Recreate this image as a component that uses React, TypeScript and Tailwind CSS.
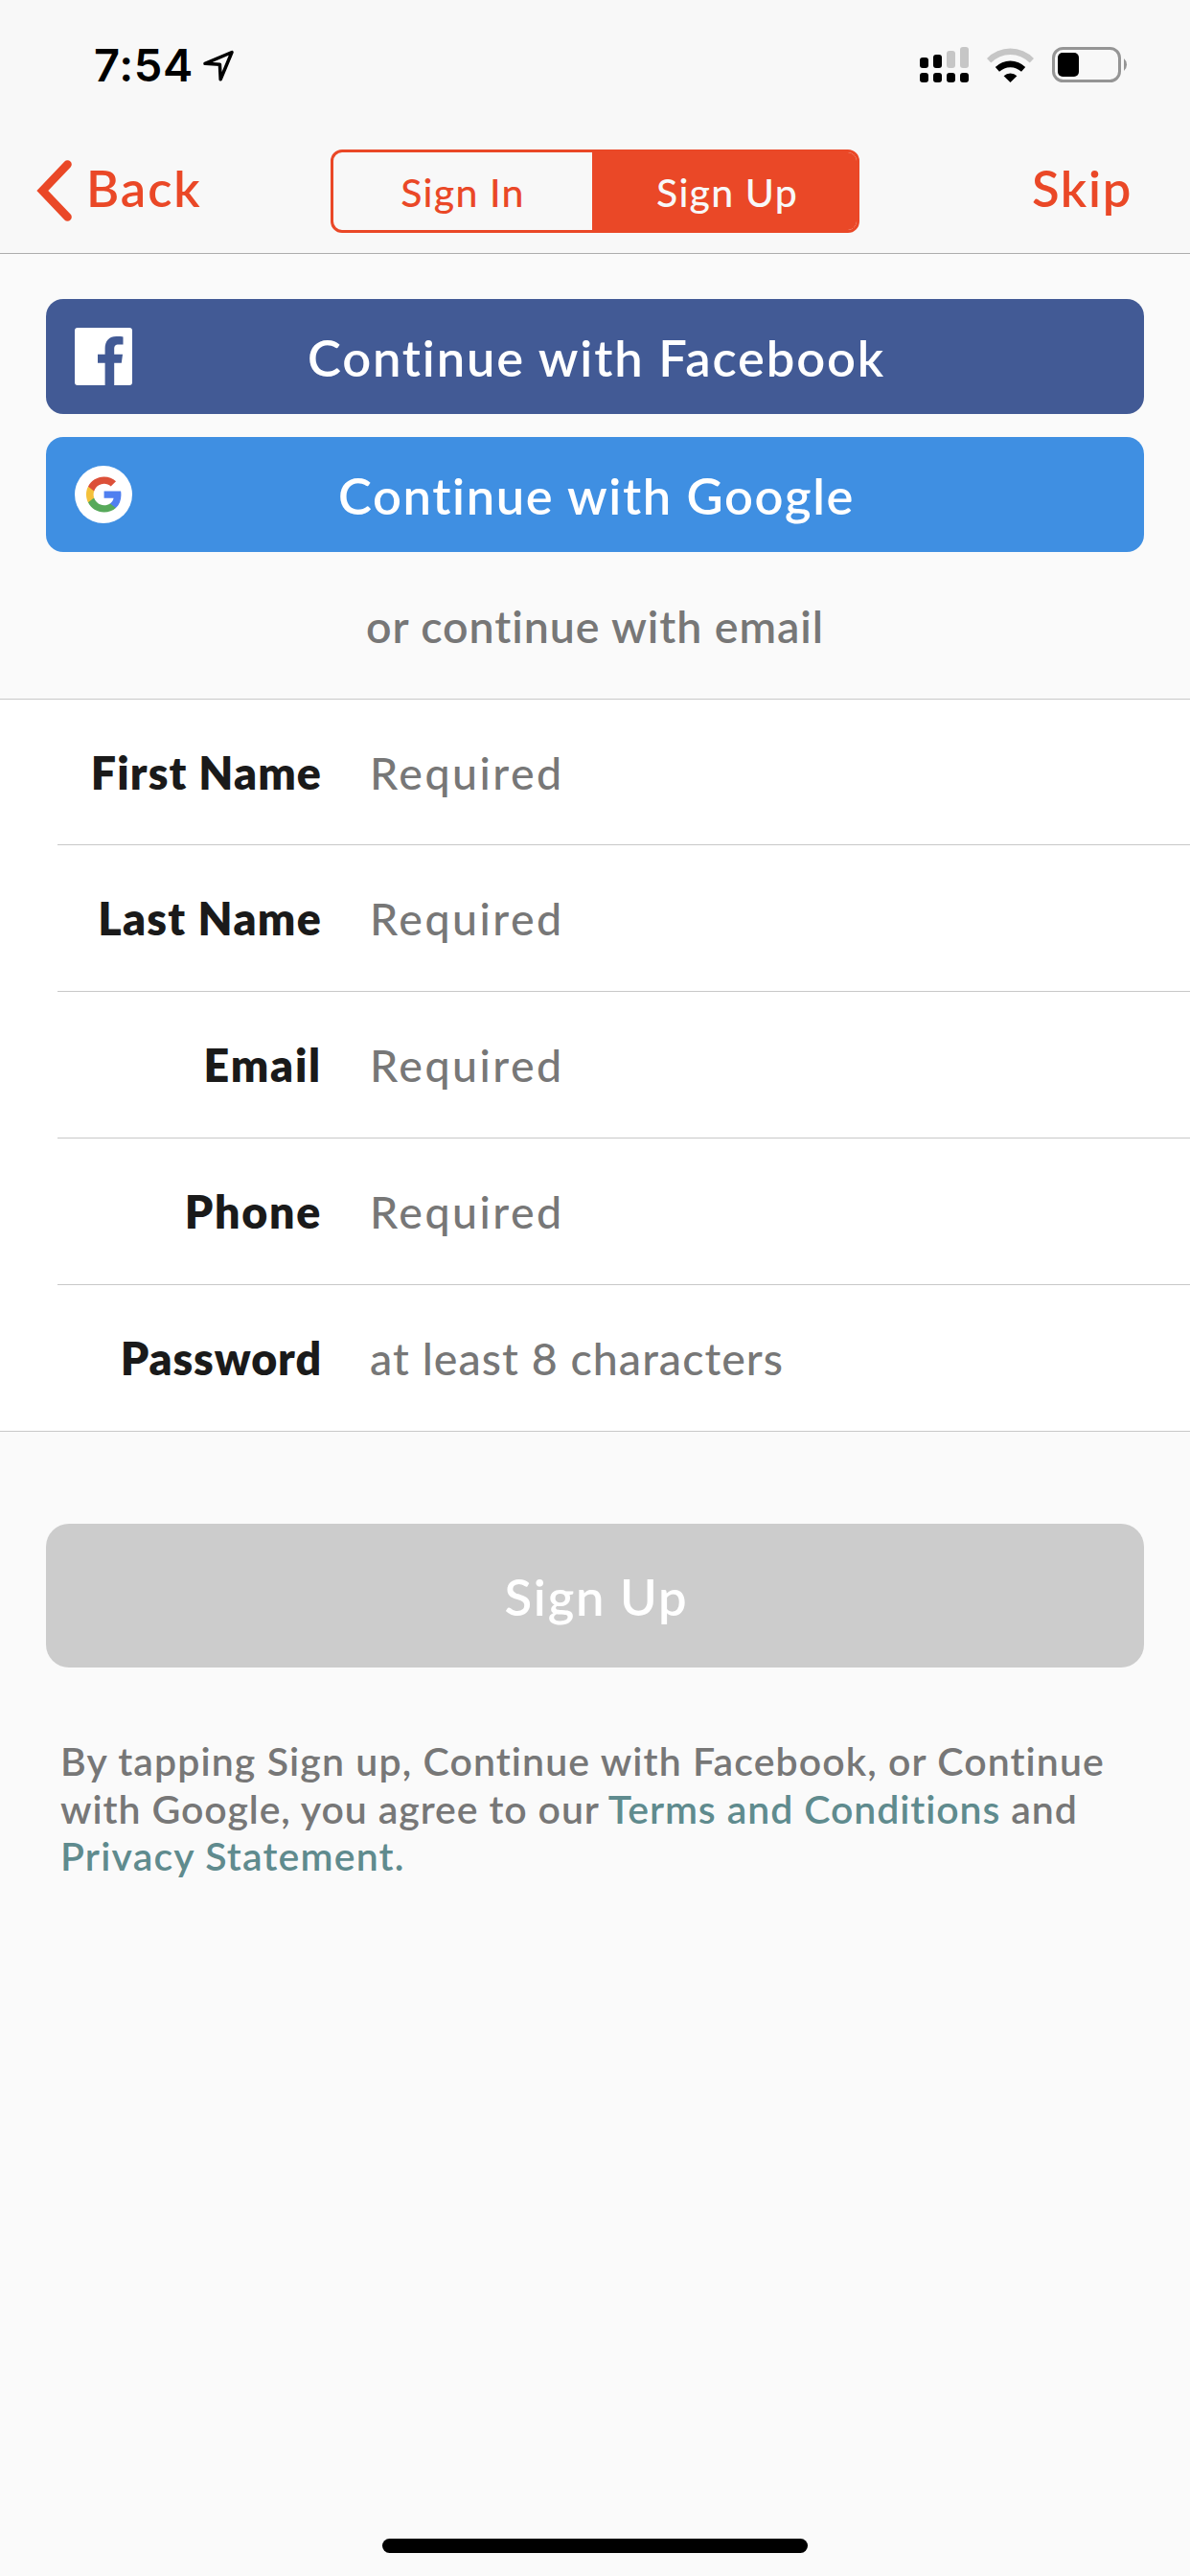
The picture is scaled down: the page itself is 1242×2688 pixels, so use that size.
import type { ReactNode } from 'react';

interface Field {
  label: string;
  type: string;
  placeholder: string;
  rowClass: string;
  labelClass: string;
  inputClass: string;
}

const FIELDS: Field[] = [
  { label: 'First Name', type: 'text', placeholder: 'Required', rowClass: 'h-[152px] border-b', labelClass: 'tracking-[1.1px]', inputClass: 'tracking-[2.5px]' },
  { label: 'Last Name', type: 'text', placeholder: 'Required', rowClass: 'h-[153px] border-b', labelClass: 'tracking-[1.3px]', inputClass: 'tracking-[2.5px]' },
  { label: 'Email', type: 'email', placeholder: 'Required', rowClass: 'h-[153px] border-b', labelClass: 'tracking-[1.8px]', inputClass: 'tracking-[2.5px]' },
  { label: 'Phone', type: 'tel', placeholder: 'Required', rowClass: 'h-[153px] border-b', labelClass: 'tracking-[1.7px]', inputClass: 'tracking-[2.5px]' },
  { label: 'Password', type: 'password', placeholder: 'at least 8 characters', rowClass: 'h-[152px]', labelClass: 'tracking-[0.9px]', inputClass: 'tracking-[1.05px]' },
];

function LocationIcon() {
  return (
    <svg width="34" height="34" viewBox="0 0 34 34" fill="none" stroke="#000" strokeWidth="3.5" strokeLinejoin="round">
      <path d="M3 15.3 31 3.5 19.2 31.8 18.4 16.2Z" />
    </svg>
  );
}

// Two stacked rows: dual SIM signal
function SignalIcon() {
  return (
    <svg width="51" height="37" viewBox="0 0 51 37" fill="#000">
      <rect x="0" y="11" width="9" height="11" rx="3" />
      <rect x="14" y="8" width="9" height="14" rx="3" />
      <rect x="28" y="4" width="9" height="18" rx="3" fill="#c6c6c6" />
      <rect x="42" y="0" width="9" height="22" rx="3" fill="#c6c6c6" />
      <rect x="0" y="27" width="9" height="10" rx="3" />
      <rect x="14" y="27" width="9" height="10" rx="3" />
      <rect x="28" y="27" width="9" height="10" rx="3" />
      <rect x="42" y="27" width="9" height="10" rx="3" />
    </svg>
  );
}

function WifiIcon() {
  return (
    <svg width="49" height="37" viewBox="0 0 49 37" fill="#000">
      <path d="M0 12A34 34 0 0 1 49 12L44.7 16.6A28 28 0 0 0 4.3 16.6Z" fill="#c6c6c6" />
      <path d="M8.8 21A22 22 0 0 1 40.2 21L36 25.8A16.5 16.5 0 0 0 13 25.8Z" />
      <path d="M17.6 30.2A10 10 0 0 1 31.4 30.2L24.5 37Z" />
    </svg>
  );
}

function BatteryIcon() {
  return (
    <svg width="79" height="37" viewBox="0 0 79 37">
      <rect x="1.5" y="1.5" width="69" height="34" rx="10" fill="none" stroke="#959595" strokeWidth="3" />
      <rect x="6" y="6" width="22" height="25" rx="5" fill="#000" />
      <path d="M75 12a8.5 8.5 0 0 1 0 13Z" fill="#959595" />
    </svg>
  );
}

function FacebookIcon() {
  return (
    <svg width="60" height="60" viewBox="0 0 60 60">
      <rect width="60" height="60" rx="3" fill="#fff" />
      <path
        d="M31.6 60V36.8H24V27.8H31.6V21.5C31.6 13.5 36.3 9 43.4 9C46.5 9 49.3 9.2 50.5 9.4V17.6H46C42 17.6 41.2 19.5 41.2 22.3V27.8H50L48.8 36.8H41.2V60Z"
        fill="#425a95"
      />
    </svg>
  );
}

function GoogleIcon() {
  return (
    <svg width="60" height="60" viewBox="0 0 60 60">
      <circle cx="30" cy="30" r="30" fill="#fff" />
      <g transform="translate(10.3 9.7) scale(1.69)">
        <path d="M22.56 12.25c0-.78-.07-1.53-.2-2.25H12v4.26h5.92c-.26 1.37-1.04 2.53-2.21 3.31v2.77h3.57c2.08-1.92 3.28-4.74 3.28-8.09z" fill="#4f7ff0" />
        <path d="M12 23c2.97 0 5.46-.98 7.28-2.66l-3.57-2.77c-.98.66-2.23 1.06-3.71 1.06-2.86 0-5.29-1.93-6.16-4.53H2.18v2.84C3.99 20.53 7.7 23 12 23z" fill="#57a95a" />
        <path d="M5.84 14.09c-.22-.66-.35-1.36-.35-2.09s.13-1.43.35-2.09V7.07H2.18C1.43 8.55 1 10.22 1 12s.43 3.45 1.18 4.93l2.85-2.22.81-.62z" fill="#f4c13a" />
        <path d="M12 5.38c1.62 0 3.06.56 4.21 1.64l3.15-3.15C17.45 2.09 14.97 1 12 1 7.7 1 3.99 3.47 2.18 7.07l3.66 2.84c.87-2.6 3.3-4.53 6.16-4.53z" fill="#dc5039" />
      </g>
    </svg>
  );
}

function StatusBar() {
  return (
    <div className="flex h-[135px] items-center justify-between pl-[98px] pr-[65px]">
      <div className="flex items-center gap-[9px]">
        <span className="pt-0.5 font-[Inter,sans-serif] text-[47px] font-semibold tracking-[0.65px] text-black">7:54</span>
        <LocationIcon />
      </div>
      <div className="flex items-center gap-[19px]">
        <SignalIcon />
        <WifiIcon />
        <BatteryIcon />
      </div>
    </div>
  );
}

function NavBar() {
  return (
    <nav className="grid h-[129px] grid-cols-[1fr_552px_1fr] items-center text-[#ea4827]">
      <button className="flex items-center gap-[14px] pb-1.5 pl-[37px] text-[52.5px] font-semibold tracking-[1.95px]">
        <svg width="39" height="64" viewBox="0 0 39 64" className="mt-1" fill="none" stroke="currentColor" strokeWidth="8.6" strokeLinecap="round">
          <path d="M33.5 4.5 7.3 32 33.5 59.5" />
        </svg>
        Back
      </button>
      <div className="flex h-[87px] overflow-hidden rounded-xl border-[3px] border-[#ea4827] text-[41px] font-medium tracking-[1.2px]">
        <button className="w-[270px] pt-0.5">Sign In</button>
        <button className="flex-1 bg-[#ea4827] pl-1.5 pt-0.5 text-[#f8f8f8]">Sign Up</button>
      </div>
      <button className="justify-self-end pb-1.5 pr-[60px] text-[52.5px] font-semibold tracking-[1.7px]">Skip</button>
    </nav>
  );
}

interface SocialButtonProps {
  className: string;
  icon: ReactNode;
  children: ReactNode;
}

function SocialButton({ className, icon, children }: SocialButtonProps) {
  return (
    <button className={`grid h-[120px] grid-cols-[60px_1fr_60px] items-center rounded-[18px] px-[30px] text-[52.5px] font-semibold text-white ${className}`}>
      {icon}
      <span className="pl-[3px] pt-0.5">{children}</span>
    </button>
  );
}

export default function App() {
  return (
    <div className="flex h-[2688px] w-[1242px] flex-col bg-[#fafafa] font-[Lato,sans-serif] text-[#777777]">
      <header className="border-b border-[#adadad] bg-[#f8f8f8]">
        <StatusBar />
        <NavBar />
      </header>

      <div className="flex flex-col gap-6 px-12 pt-[47px]">
        <SocialButton className="bg-[#425a95] tracking-[1.83px]" icon={<FacebookIcon />}>Continue with Facebook</SocialButton>
        <SocialButton className="bg-[#3f8fe2] tracking-[1.62px]" icon={<GoogleIcon />}>Continue with Google</SocialButton>
      </div>

      <p className="flex h-[153px] items-center justify-center pt-0.5 text-[46.5px] font-semibold tracking-[0.95px]">or continue with email</p>

      {/* Form */}
      <div className="border-y border-[#c8c8c8] bg-white">
        {FIELDS.map((field) => (
          <div key={field.label} className="pl-[60px] text-[46.5px]">
            <label className={`flex items-center border-[#c8c8c8] pt-0.5 ${field.rowClass}`}>
              <span className={`w-[276px] text-right font-extrabold text-[#1a1a1a] ${field.labelClass}`}>{field.label}</span>
              <input
                type={field.type}
                placeholder={field.placeholder}
                className={`ml-[50px] flex-1 bg-transparent font-medium outline-none placeholder:text-[#777777] ${field.inputClass}`}
              />
            </label>
          </div>
        ))}
      </div>

      <div className="px-12 pt-24">
        <button disabled className="h-[150px] w-full rounded-3xl bg-[#cccccc] pl-[3px] pt-0.5 text-[52.5px] font-semibold tracking-[1.8px] text-white">
          Sign Up
        </button>
      </div>

      <p className="mt-[73px] whitespace-nowrap pl-[63px] text-[41px] font-semibold leading-[49.5px]">
        <span className="tracking-[1.1px]">By tapping Sign up, Continue with Facebook, or Continue</span>
        <br />
        <span className="tracking-[0.9px]">
          with Google, you agree to our <a className="text-[#5f8b8e]">Terms and Conditions</a> and
        </span>
        <br />
        <a className="tracking-[1.18px] text-[#5f8b8e]">Privacy Statement.</a>
      </p>

      <div className="mx-auto mb-6 mt-auto h-[15px] w-[444px] rounded-full bg-black" />
    </div>
  );
}
